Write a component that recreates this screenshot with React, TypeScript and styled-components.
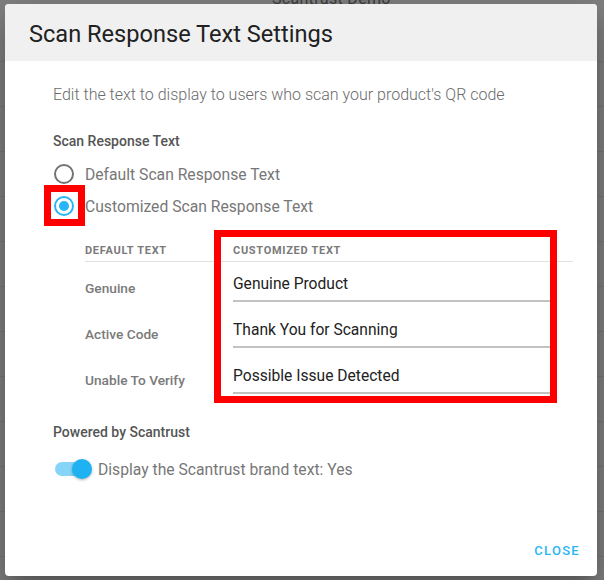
import React from "react";
import styled, { createGlobalStyle } from "styled-components";

const Global = createGlobalStyle`
  html, body { margin: 0; padding: 0; }
  body { font-family: Roboto, "Noto Sans", Arial, sans-serif; background: #818181; }
`;

const Page = styled.div`
  position: relative;
  width: 604px;
  height: 580px;
  overflow: hidden;
  background-color: #818181;
  background-image: repeating-linear-gradient(
    to bottom,
    transparent 0px,
    transparent 44px,
    #767676 44px,
    #767676 45px
  );
  background-position: 0 17px;
`;

const BgTitle = styled.div`
  margin: -11px 0 0 272px;
  font-size: 16px;
  line-height: 20px;
  color: #3d3d3d;
  letter-spacing: 0.3px;
`;

const Dialog = styled.div`
  position: absolute;
  top: 4px;
  left: 5px;
  width: 592px;
  height: 572px;
  background: #ffffff;
  border-radius: 4px;
  box-shadow: 0 11px 15px -7px rgba(0, 0, 0, 0.2), 0 24px 38px 3px rgba(0, 0, 0, 0.14),
    0 9px 46px 8px rgba(0, 0, 0, 0.12);
  display: flex;
  flex-direction: column;
  overflow: hidden;
`;

const Header = styled.div`
  box-sizing: border-box;
  height: 57px;
  flex: none;
  background: #f0f0f0;
  display: flex;
  align-items: center;
  padding: 3px 0 0 24px;
  font-size: 23.6px;
  font-weight: 400;
  color: #212121;
`;

const Body = styled.div`
  flex: 1;
  padding-left: 48px;
  display: flex;
  flex-direction: column;
`;

const Description = styled.div`
  margin-top: 24px;
  line-height: 20px;
  font-size: 16px;
  font-weight: 300;
  color: #6b6b6b;
`;

const SectionLabel = styled.div<{ $gap: number }>`
  margin-top: ${(p) => p.$gap}px;
  line-height: 18px;
  font-size: 14px;
  font-weight: 500;
  color: #555555;
`;

const RadioGroup = styled.div`
  margin-top: 8px;
  display: flex;
  flex-direction: column;
`;

const RadioRow = styled.label`
  position: relative;
  height: 32px;
  display: flex;
  align-items: center;
  gap: 11px;
  font-size: 15.7px;
  color: #777777;
`;

const RadioIcon = styled.span<{ $checked?: boolean }>`
  box-sizing: border-box;
  width: 20px;
  height: 20px;
  margin-left: 1px;
  border-radius: 50%;
  border: 2px solid ${(p) => (p.$checked ? "#29b6f6" : "#737373")};
  display: flex;
  align-items: center;
  justify-content: center;
  &::after {
    content: "";
    display: ${(p) => (p.$checked ? "block" : "none")};
    width: 10px;
    height: 10px;
    border-radius: 50%;
    background: #29b6f6;
  }
`;

const Highlight = styled.span<{ $l: number; $t: number; $w: number; $h: number }>`
  position: absolute;
  box-sizing: border-box;
  left: ${(p) => p.$l}px;
  top: ${(p) => p.$t}px;
  width: ${(p) => p.$w}px;
  height: ${(p) => p.$h}px;
  border: 7px solid #ff0000;
  pointer-events: none;
`;

const Table = styled.div`
  position: relative;
  margin: 17px 0 0 32px;
  width: 488px;
  display: flex;
  flex-direction: column;
`;

const HeadRow = styled.div`
  display: grid;
  grid-template-columns: 148px 1fr;
  height: 22px;
  align-items: center;
  border-bottom: 1px solid #e0e0e0;
`;

const HeadCell = styled.div`
  font-size: 11px;
  font-weight: 700;
  letter-spacing: 0.7px;
  color: #7a7a7a;
  text-transform: uppercase;
`;

const Row = styled.div`
  display: grid;
  grid-template-columns: 148px 1fr;
  height: 46px;
`;

const RowLabel = styled.div`
  padding-top: 16px;
  line-height: 20px;
  font-size: 13.7px;
  font-weight: 500;
  color: #7a7a7a;
`;

const TextInput = styled.input`
  box-sizing: content-box;
  margin: 6px 22px 0 0;
  padding: 0;
  height: 32px;
  border: none;
  border-bottom: 2px solid #c2c2c2;
  outline: none;
  font-family: Roboto, "Noto Sans", Arial, sans-serif;
  font-size: 15.6px;
  color: #222222;
  background: transparent;
`;

const SwitchRow = styled.div`
  margin-top: 16px;
  height: 24px;
  display: flex;
  align-items: center;
  gap: 6px;
  font-size: 15.7px;
  color: #777777;
`;

const SwitchControl = styled.span`
  position: relative;
  margin-left: 2px;
  width: 37px;
  height: 24px;
  display: flex;
  align-items: center;
`;

const Track = styled.span`
  width: 35px;
  height: 14px;
  border-radius: 7px;
  background: #86d5f8;
`;

const Thumb = styled.span`
  position: absolute;
  left: 17px;
  top: 2px;
  width: 20px;
  height: 20px;
  border-radius: 50%;
  background: #1fb2f3;
  box-shadow: 0 1px 3px rgba(0, 0, 0, 0.3);
`;

const Footer = styled.div`
  display: flex;
  justify-content: flex-end;
  padding: 0 17px 16px 0;
`;

const CloseButton = styled.button`
  border: none;
  background: none;
  padding: 0;
  line-height: 18px;
  font-family: Roboto, "Noto Sans", Arial, sans-serif;
  font-size: 13px;
  font-weight: 500;
  letter-spacing: 1.3px;
  color: #29b6f6;
  cursor: pointer;
`;

const rows = [
  { label: "Genuine", value: "Genuine Product" },
  { label: "Active Code", value: "Thank You for Scanning" },
  { label: "Unable To Verify", value: "Possible Issue Detected" },
];

export default function App() {
  return (
    <>
      <Global />
      <Page>
        <BgTitle>Scantrust Demo</BgTitle>
        <Dialog>
          <Header>Scan Response Text Settings</Header>
          <Body>
            <Description>Edit the text to display to users who scan your product's QR code</Description>
            <SectionLabel $gap={27}>Scan Response Text</SectionLabel>
            <RadioGroup>
              <RadioRow>
                <RadioIcon />
                Default Scan Response Text
              </RadioRow>
              <RadioRow>
                <RadioIcon $checked />
                Customized Scan Response Text
                <Highlight $l={-9} $t={-5} $w={41} $h={41} />
              </RadioRow>
            </RadioGroup>
            <Table>
              <HeadRow>
                <HeadCell>Default Text</HeadCell>
                <HeadCell>Customized Text</HeadCell>
              </HeadRow>
              {rows.map((r) => (
                <Row key={r.label}>
                  <RowLabel>{r.label}</RowLabel>
                  <TextInput defaultValue={r.value} />
                </Row>
              ))}
              <Highlight $l={129} $t={-9} $w={343} $h={173} />
            </Table>
            <SectionLabel $gap={23}>Powered by Scantrust</SectionLabel>
            <SwitchRow>
              <SwitchControl>
                <Track />
                <Thumb />
              </SwitchControl>
              Display the Scantrust brand text: Yes
            </SwitchRow>
          </Body>
          <Footer>
            <CloseButton>CLOSE</CloseButton>
          </Footer>
        </Dialog>
      </Page>
    </>
  );
}
